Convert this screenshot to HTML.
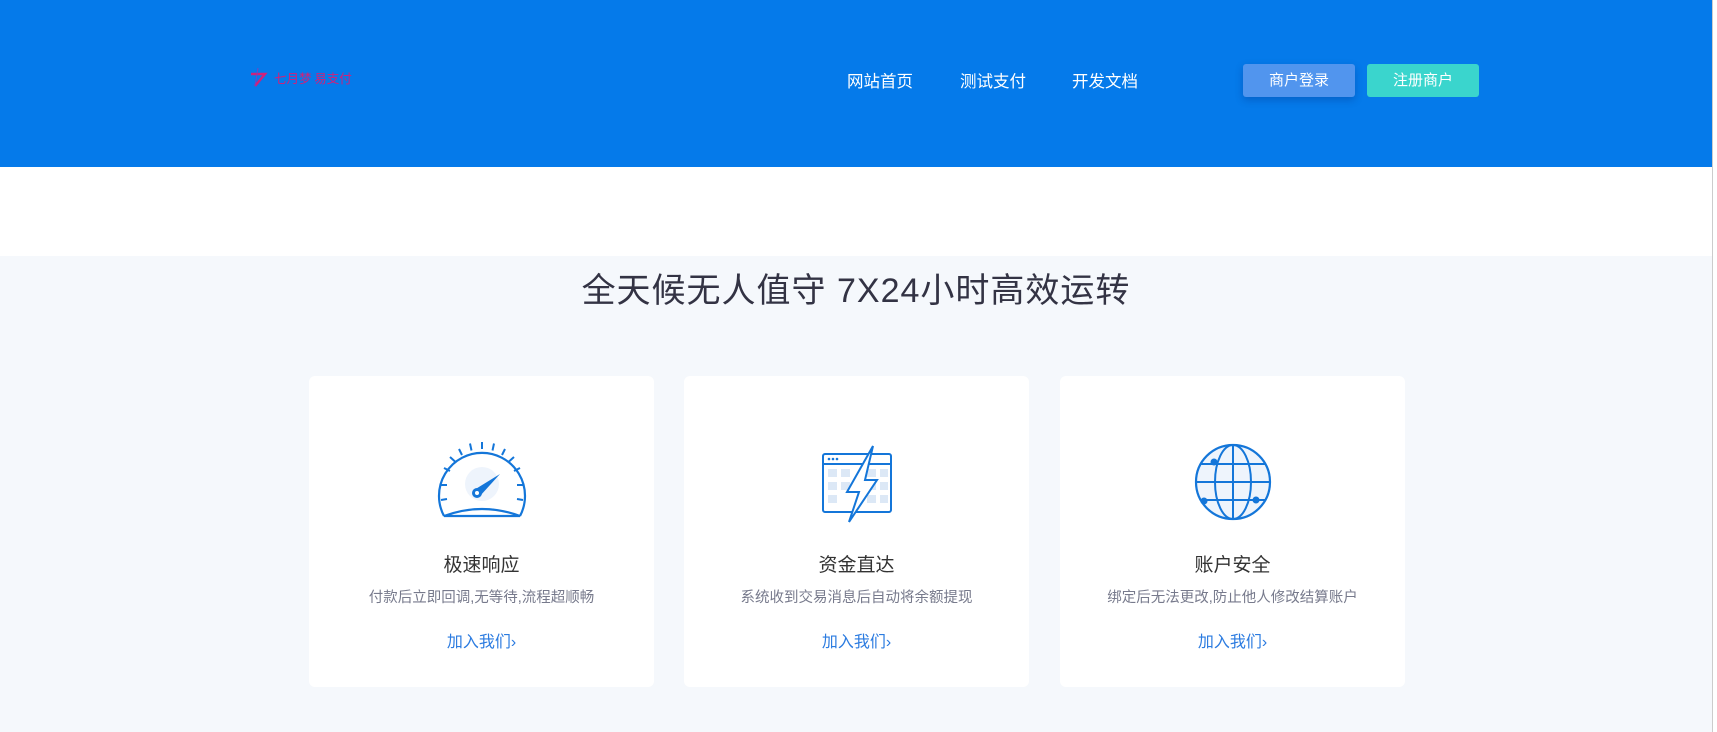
<!DOCTYPE html>
<html><head><meta charset="utf-8"><style>
*{margin:0;padding:0;box-sizing:border-box}
body{width:1717px;height:732px;overflow:hidden;background:#f5f8fc;font-family:"Liberation Sans","Noto Sans CJK SC",sans-serif;position:relative}
.hdr{position:absolute;left:0;top:0;width:1712px;height:167px;background:#057aea}
.white{position:absolute;left:0;top:167px;width:1712px;height:89px;background:#fff}
.sb{position:absolute;right:0;top:0;width:5px;height:732px;background:#fff;border-left:1px solid #ccc}
.nav{position:absolute;top:68px;color:#fff;font-size:16.5px}
.btn{position:absolute;top:64px;height:33px;width:112px;border-radius:3px;color:#fff;font-size:15px;text-align:center;line-height:33px}
.title{position:absolute;top:263px;left:0;width:1712px;text-align:center;font-size:34px;color:#333344;letter-spacing:1px}
.card{position:absolute;top:376px;width:345px;height:311px;background:#fff;border-radius:6px;text-align:center}
.card svg{position:absolute;left:50%;top:64px;transform:translateX(-50%)}
.ct{position:absolute;top:174px;width:100%;font-size:19px;color:#333}
.cd{position:absolute;top:210px;width:100%;font-size:14.5px;color:#777a8c}
.cl{position:absolute;top:252px;width:100%;font-size:16px;color:#2b7be0}
</style></head><body>
<div class="hdr"></div>
<div class="white"></div>
<div class="sb"></div>
<svg style="position:absolute;left:248px;top:66px" width="120" height="24"><path d="M3 8h14l-10 12" stroke="#d0217a" stroke-width="2.5" fill="none"/><path d="M10 2l-3 18" stroke="#7a40c0" stroke-width="1" fill="none"/><text x="26" y="17" font-size="12.5" fill="#d0217a" font-family="Noto Sans CJK SC">七月梦 易支付</text></svg>
<div class="nav" style="left:847px">网站首页</div>
<div class="nav" style="left:960px">测试支付</div>
<div class="nav" style="left:1072px">开发文档</div>
<div class="btn" style="left:1243px;background:#5195ee;box-shadow:0 3px 8px rgba(0,40,120,.3)">商户登录</div>
<div class="btn" style="left:1367px;background:#3ad5cd">注册商户</div>
<div class="title">全天候无人值守 7X24小时高效运转</div>

<div class="card" style="left:309px">
<svg width="92" height="84" viewBox="0 0 92 84"><circle cx="46" cy="44" r="17" fill="#eef4fc"/><path d="M8 76 A43 43 0 1 1 84 76" fill="none" stroke="#1476d9" stroke-width="2.2"/><path d="M8 76 Q46 62 84 76 Z" fill="none" stroke="#1476d9" stroke-width="2.2"/><g stroke="#1476d9" stroke-width="2"><path d="M46 2v7M34 3.5l1.5 7M58 3.5l-1.5 7M23 9l3 6M69 9l-3 6M14 17l5 4.5M78 17l-5 4.5M8 28l6 3M84 28l-6 3M4 45h7M88 45h-7M5 60l6-1M87 60l-6-1"/></g><path d="M38 50 L64 34 L44 56 Z" fill="#1476d9"/><circle cx="41" cy="53" r="5" fill="#1476d9"/><circle cx="41" cy="53" r="2" fill="#fff"/></svg>
<div class="ct">极速响应</div><div class="cd">付款后立即回调,无等待,流程超顺畅</div><div class="cl">加入我们›</div></div>

<div class="card" style="left:684px">
<svg width="76" height="84" viewBox="0 0 76 84"><rect x="4" y="14" width="68" height="58" rx="2" fill="#fff" stroke="#1476d9" stroke-width="2"/><path d="M4 24h68" stroke="#1476d9" stroke-width="2"/><g fill="#1476d9"><circle cx="10" cy="19" r="1.3"/><circle cx="14" cy="19" r="1.3"/><circle cx="18" cy="19" r="1.3"/></g><g fill="#dce8f6"><rect x="9" y="29" width="9" height="8"/><rect x="22" y="29" width="9" height="8"/><rect x="48" y="29" width="9" height="8"/><rect x="61" y="29" width="8" height="8"/><rect x="9" y="42" width="9" height="8"/><rect x="22" y="42" width="9" height="8"/><rect x="48" y="42" width="9" height="8"/><rect x="61" y="42" width="8" height="8"/><rect x="9" y="55" width="9" height="8"/><rect x="48" y="55" width="9" height="8"/><rect x="61" y="55" width="8" height="8"/></g><path d="M54 6 L28 52 H40 L30 82 L58 40 H46 Z" fill="#fff" stroke="#1476d9" stroke-width="2"/></svg>
<div class="ct">资金直达</div><div class="cd">系统收到交易消息后自动将余额提现</div><div class="cl">加入我们›</div></div>

<div class="card" style="left:1060px">
<svg width="84" height="84" viewBox="0 0 84 84"><circle cx="42" cy="42" r="37" fill="#eef4fc" stroke="#1476d9" stroke-width="2.2"/><ellipse cx="42" cy="42" rx="18" ry="37" fill="none" stroke="#1476d9" stroke-width="2"/><path d="M42 5v74M10 24h64M5 42h74M10 60h64" stroke="#1476d9" stroke-width="2"/><g fill="#1476d9"><circle cx="23" cy="22" r="3.5"/><circle cx="13" cy="61" r="3.5"/><circle cx="65" cy="60" r="3.5"/></g></svg>
<div class="ct">账户安全</div><div class="cd">绑定后无法更改,防止他人修改结算账户</div><div class="cl">加入我们›</div></div>
</body></html>
